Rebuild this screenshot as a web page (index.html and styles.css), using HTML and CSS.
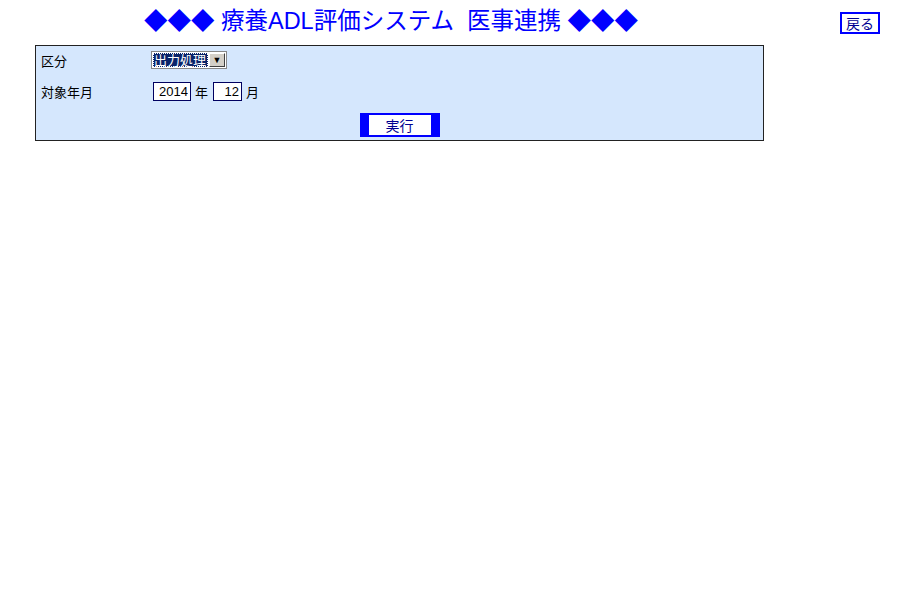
FILE: index.html
```html
<!DOCTYPE html>
<html lang="ja">
<head>
    <meta charset="UTF-8">
    <title>療養ADL評価システム 医事連携</title>
    <link rel="stylesheet" href="styles.css">
</head>
<body>
    <div class="header">
        <h1 class="title">◆◆◆ 療養ADL評価システム&nbsp;&nbsp;医事連携 ◆◆◆</h1>
        <button class="back-btn">戻る</button>
    </div>

    <div class="panel">
        <div class="row">
            <span class="label">区分</span>
            <div class="select-box">
                <span class="select-value">出力処理</span>
                <span class="select-arrow">&#9660;</span>
            </div>
        </div>
        <div class="row">
            <span class="label">対象年月</span>
            <input class="num-input year" type="text" value="2014">
            <span class="unit">年</span>
            <input class="num-input month" type="text" value="12">
            <span class="unit">月</span>
        </div>
        <div class="actions">
            <button class="run-btn">実行</button>
        </div>
    </div>
</body>
</html>
```

FILE: styles.css
```css
body { margin: 0; background: #fff; font-family: "Liberation Sans", "Noto Sans CJK JP", sans-serif; color: #000; }

.header { display: flex; align-items: flex-start; height: 45px; }
.title { width: 782px; margin: 5px 0 0; text-align: center; font-size: 23.5px; line-height: 32px; font-weight: normal; color: #0000ff; }
.back-btn { margin: 12px 20px 0 auto; width: 40px; height: 22px; padding: 0; background: #fff; border: 2px solid #0000ff; color: #000090; font-family: "Noto Sans CJK JP", sans-serif; font-size: 14px; line-height: 16px; }

.panel { margin-left: 35px; width: 727px; border: 1px solid #222; background: #d5e7fd; }
.row { display: flex; align-items: center; height: 28px; padding-left: 5px; font-size: 13px; }
.row + .row { height: 34px; }
.label { width: 110px; }

.select-box { display: flex; align-items: center; width: 74px; height: 16px; border: 1px solid #888; background: #fff; }
.select-value { display: flex; align-items: center; height: 14px; margin-left: 1px; padding: 0 1px; width: 53px; background: #0a246a; color: #fff; outline: 1px dotted #fff; outline-offset: -1px; font-size: 13px; line-height: 14px; font-family: "Noto Sans CJK JP", sans-serif; }
.select-arrow { margin-left: auto; margin-right: 1px; width: 16px; height: 14px; background: #d4d0c8; border: 1px solid #fff; border-right-color: #404040; border-bottom-color: #404040; box-sizing: border-box; font-size: 9px; line-height: 12px; text-align: center; color: #000; }

.num-input { height: 19px; box-sizing: border-box; margin: 0; padding: 0 2px 0 0; border: 1px solid #000060; background: #fff; text-align: right; font-family: "Liberation Sans", sans-serif; font-size: 13px; color: #000; }
.year { width: 38px; margin-left: 2px; }
.month { width: 29px; }
.unit { margin: 0 5px 0 4px; font-family: "Noto Sans CJK JP", sans-serif; }

.actions { display: flex; justify-content: center; height: 32px; }
.run-btn { margin-top: 5px; width: 80px; height: 24px; padding: 0; background: #fff; border: solid #0000ff; border-width: 2px 9px; color: #000090; font-family: "Noto Sans CJK JP", sans-serif; font-size: 14px; }
```
